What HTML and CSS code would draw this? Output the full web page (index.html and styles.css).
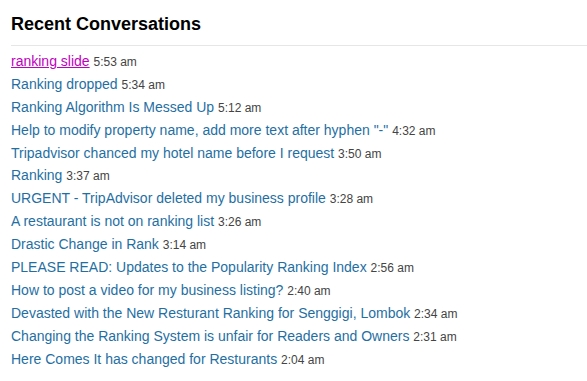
FILE: index.html
```html
<!DOCTYPE html>
<html lang="en">
<head>
  <meta charset="UTF-8" />
  <title>Recent Conversations</title>
  <link rel="stylesheet" href="styles.css">
</head>
<body>
  <section class="recent">
    <h2>Recent Conversations</h2>
    <ul class="convos">
      <li><a class="visited" href="#">ranking slide</a> <span class="time">5:53 am</span></li>
      <li><a href="#">Ranking dropped</a> <span class="time">5:34 am</span></li>
      <li><a href="#">Ranking Algorithm Is Messed Up</a> <span class="time">5:12 am</span></li>
      <li><a href="#">Help to modify property name, add more text after hyphen "-"</a> <span class="time">4:32 am</span></li>
      <li><a href="#">Tripadvisor chanced my hotel name before I request</a> <span class="time">3:50 am</span></li>
      <li><a href="#">Ranking</a> <span class="time">3:37 am</span></li>
      <li><a href="#">URGENT - TripAdvisor deleted my business profile</a> <span class="time">3:28 am</span></li>
      <li><a href="#">A restaurant is not on ranking list</a> <span class="time">3:26 am</span></li>
      <li><a href="#">Drastic Change in Rank</a> <span class="time">3:14 am</span></li>
      <li><a href="#">PLEASE READ: Updates to the Popularity Ranking Index</a> <span class="time">2:56 am</span></li>
      <li><a href="#">How to post a video for my business listing?</a> <span class="time">2:40 am</span></li>
      <li><a href="#">Devasted with the New Resturant Ranking for Senggigi, Lombok</a> <span class="time">2:34 am</span></li>
      <li><a href="#">Changing the Ranking System is unfair for Readers and Owners</a> <span class="time">2:31 am</span></li>
      <li><a href="#">Here Comes It has changed for Resturants</a> <span class="time">2:04 am</span></li>
    </ul>
  </section>
</body>
</html>
```

FILE: styles.css
```css
body {
  margin: 0;
  padding: 14px 0 0 11px;
  font-family: "Liberation Sans", Arial, sans-serif;
  background: #fff;
}
.recent h2 {
  margin: 0;
  padding-bottom: 10px;
  font-size: 18px;
  font-weight: bold;
  color: #000;
  border-bottom: 1px solid #e6e6e6;
}
.convos {
  list-style: none;
  margin: 0;
  padding: 4px 0 0;
}
.convos li {
  height: 22.9px;
  line-height: 22.9px;
  font-size: 14px;
  white-space: nowrap;
}
.convos a {
  color: #1f6fa3;
  text-decoration: none;
}
.convos a.visited {
  color: #c000c0;
  text-decoration: underline;
}
.time {
  font-size: 12px;
  line-height: 14px;
  color: #444;
}
```
